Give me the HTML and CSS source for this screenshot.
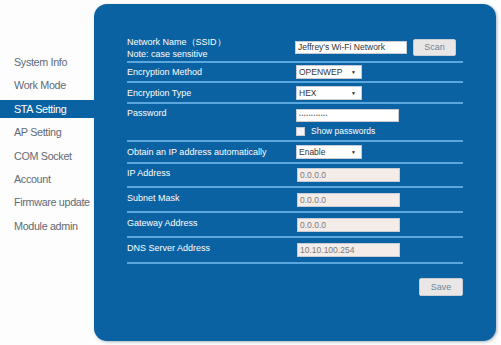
FILE: index.html
```html
<!DOCTYPE html>
<html>
<head>
<meta charset="utf-8">
<link rel="stylesheet" href="styles.css">
</head>
<body>
<div class="page">
  <aside class="sidebar">
    <a class="nav-item">System Info</a>
    <a class="nav-item">Work Mode</a>
    <a class="nav-item active">STA Setting</a>
    <a class="nav-item">AP Setting</a>
    <a class="nav-item">COM Socket</a>
    <a class="nav-item">Account</a>
    <a class="nav-item">Firmware update</a>
    <a class="nav-item">Module admin</a>
  </aside>
  <main class="panel">
    <div class="row row-ssid">
      <div class="label">Network Name（SSID）<br>Note: case sensitive</div>
      <div class="value">
        <div class="field field-ssid">Jeffrey's Wi-Fi Network</div>
        <div class="btn btn-scan">Scan</div>
      </div>
    </div>
    <div class="row h18">
      <div class="label">Encryption Method</div>
      <div class="value"><div class="select">OPENWEP<span class="arrow">▼</span></div></div>
    </div>
    <div class="row h19">
      <div class="label">Encryption Type</div>
      <div class="value"><div class="select">HEX<span class="arrow">▼</span></div></div>
    </div>
    <div class="row row-pass">
      <div class="label">Password</div>
      <div class="value value-col">
        <div class="field field-pass">●●●●●●●●●●●●</div>
        <label class="check"><span class="box"></span>Show passwords</label>
      </div>
    </div>
    <div class="row h20">
      <div class="label">Obtain an IP address automatically</div>
      <div class="value"><div class="select">Enable<span class="arrow">▼</span></div></div>
    </div>
    <div class="row h22 raised">
      <div class="label">IP Address</div>
      <div class="value"><div class="field disabled">0.0.0.0</div></div>
    </div>
    <div class="row h23 raised">
      <div class="label">Subnet Mask</div>
      <div class="value"><div class="field disabled">0.0.0.0</div></div>
    </div>
    <div class="row h23 raised">
      <div class="label">Gateway Address</div>
      <div class="value"><div class="field disabled">0.0.0.0</div></div>
    </div>
    <div class="row h24 raised">
      <div class="label">DNS Server Address</div>
      <div class="value"><div class="field disabled">10.10.100.254</div></div>
    </div>
    <div class="actions"><div class="btn btn-save">Save</div></div>
  </main>
</div>
</body>
</html>
```
FILE: styles.css
```css
html, body {
  margin: 0;
  padding: 0;
  background: #fdfdfd;
  font-family: "Liberation Sans", Arial, sans-serif;
}
.page {
  display: flex;
  align-items: flex-start;
  width: 501px;
  height: 345px;
}
.sidebar {
  width: 94px;
  flex: none;
  padding-top: 53px;
  display: flex;
  flex-direction: column;
  gap: 5.4px;
}
.nav-item {
  display: block;
  height: 18px;
  line-height: 18px;
  padding-left: 14px;
  font-size: 10.8px;
  color: #5f6b78;
  white-space: nowrap;
  letter-spacing: -0.35px;
}
.nav-item.active {
  background: #0b62a2;
  color: #ffffff;
}
.panel {
  margin-top: 4px;
  width: 402px;
  height: 337px;
  box-sizing: border-box;
  padding: 30px 33px 0 33px;
  background: #0b62a2;
  border-radius: 13px;
  box-shadow: 1px 1px 3px rgba(90, 110, 130, 0.5);
}
.row {
  display: grid;
  grid-template-columns: 169px 1fr;
  align-items: center;
  border-bottom: 2px solid #5aa7e0;
  box-sizing: content-box;
}
.row-ssid { height: 27px; }
.h18 { height: 18px; }
.h19 { height: 19px; }
.h20 { height: 20px; }
.h22 { height: 22px; }
.h23 { height: 23px; }
.h24 { height: 24px; }
.raised .label { margin-bottom: 4px; }
.row-pass {
  height: 36px;
  align-items: start;
}
.row-pass .label { margin-top: 3px; }
.label {
  color: #ffffff;
  font-size: 9px;
  line-height: 12px;
  white-space: nowrap;
}
.value {
  display: flex;
  align-items: center;
  gap: 6px;
}
.value-col {
  flex-direction: column;
  align-items: flex-start;
  gap: 4px;
  padding-top: 5px;
}
.field {
  box-sizing: border-box;
  height: 14px;
  width: 103px;
  background: #ffffff;
  border: 1px solid #c9ccd2;
  font-size: 8.5px;
  line-height: 12px;
  padding-left: 2px;
  color: #333;
  white-space: nowrap;
  overflow: hidden;
}
.field-ssid {
  width: 112px;
  height: 13px;
  line-height: 11px;
  margin-left: -1px;
}
.field-pass {
  height: 13px;
  font-size: 3px;
  line-height: 11px;
  letter-spacing: 0.6px;
  color: #444;
}
.disabled {
  background: #f4ece8;
  color: #7a7a7a;
  margin-left: 1px;
}
.select {
  box-sizing: border-box;
  position: relative;
  width: 66px;
  height: 14px;
  background: #ffffff;
  border: 1px solid #c9ccd2;
  font-size: 8.5px;
  line-height: 12px;
  padding-left: 2px;
  color: #333;
}
.arrow {
  position: absolute;
  right: 5px;
  top: 0;
  font-size: 5px;
  line-height: 12px;
  color: #222;
}
.btn {
  box-sizing: border-box;
  background: #ebe6e6;
  border: 1px solid #c8ccd4;
  border-radius: 2px;
  color: #6a86a0;
  font-size: 9px;
  text-align: center;
}
.btn-scan {
  width: 43px;
  height: 17px;
  line-height: 15px;
}
.check {
  display: flex;
  align-items: center;
  gap: 6px;
  color: #ffffff;
  font-size: 8.5px;
  line-height: 10px;
}
.box {
  display: inline-block;
  width: 7px;
  height: 7px;
  background: #f4f4f4;
  border: 1px solid #c9ccd2;
}
.actions {
  display: flex;
  justify-content: flex-end;
  padding-top: 14px;
}
.btn-save {
  width: 44px;
  height: 18px;
  line-height: 16px;
}
```
